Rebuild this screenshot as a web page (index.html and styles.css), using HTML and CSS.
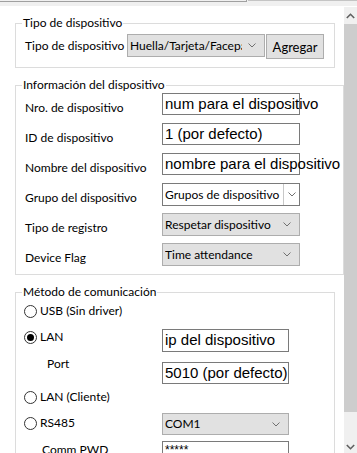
FILE: index.html
```html
<!DOCTYPE html>
<html>
<head>
    <title>Dispositivo</title>
    <link rel="stylesheet" href="styles.css">
</head>
<body>
<div class="window">
    <div class="tab-strip">
        <span class="tab-active"></span>
        <span class="tab-next"></span>
    </div>
    <div class="pane">
        <div class="content">
            <fieldset class="group group-narrow">
                <legend>Tipo de dispositivo</legend>
                <div class="type-row">
                    <span class="type-label">Tipo de dispositivo</span>
                    <div class="combo combo-type">
                        <span class="combo-text">Huella/Tarjeta/Facepa</span>
                        <svg class="chev" width="8" height="5" viewBox="0 0 8 5"><path d="M0.5 0.5 L4 4 L7.5 0.5" fill="none" stroke="#707070"/></svg>
                    </div>
                    <button class="btn">Agregar</button>
                </div>
            </fieldset>

            <fieldset class="group group-wide">
                <legend>Información del dispositivo</legend>
                <div class="info-grid">
                    <span class="lbl">Nro. de dispositivo</span>
                    <div class="field">num para el dispositivo</div>

                    <span class="lbl">ID de dispositivo</span>
                    <div class="field">1 (por defecto)</div>

                    <span class="lbl">Nombre del dispositivo</span>
                    <div class="field">nombre para el dispositivo</div>

                    <span class="lbl">Grupo del dispositivo</span>
                    <div class="combo combo-white">
                        <span class="combo-text">Grupos de dispositivo</span>
                        <span class="combo-btn">
                            <svg width="8" height="5" viewBox="0 0 8 5"><path d="M0.5 0.5 L4 4 L7.5 0.5" fill="none" stroke="#707070"/></svg>
                        </span>
                    </div>

                    <span class="lbl">Tipo de registro</span>
                    <div class="combo">
                        <span class="combo-text">Respetar dispositivo</span>
                        <svg class="chev" width="8" height="5" viewBox="0 0 8 5"><path d="M0.5 0.5 L4 4 L7.5 0.5" fill="none" stroke="#707070"/></svg>
                    </div>

                    <span class="lbl">Device Flag</span>
                    <div class="combo">
                        <span class="combo-text">Time attendance</span>
                        <svg class="chev" width="8" height="5" viewBox="0 0 8 5"><path d="M0.5 0.5 L4 4 L7.5 0.5" fill="none" stroke="#707070"/></svg>
                    </div>
                </div>
            </fieldset>

            <fieldset class="group group-narrow">
                <legend>Método de comunicación</legend>
                <div class="comm">
                    <div class="comm-row row-usb">
                        <span class="opt"><span class="radio"></span>USB (Sin driver)</span>
                    </div>
                    <div class="comm-row row-lan">
                        <span class="opt"><span class="radio checked"></span>LAN</span>
                        <div class="field field-short">ip del dispositivo</div>
                    </div>
                    <div class="comm-row row-port">
                        <span class="sub-lbl sub-port">Port</span>
                        <div class="field field-short">5010 (por defecto)</div>
                    </div>
                    <div class="comm-row row-client">
                        <span class="opt"><span class="radio"></span>LAN (Cliente)</span>
                    </div>
                    <div class="comm-row row-rs">
                        <span class="opt"><span class="radio"></span>RS485</span>
                        <div class="combo combo-short">
                            <span class="combo-text">COM1</span>
                            <svg class="chev" width="8" height="5" viewBox="0 0 8 5"><path d="M0.5 0.5 L4 4 L7.5 0.5" fill="none" stroke="#707070"/></svg>
                        </div>
                    </div>
                    <div class="comm-row row-pwd">
                        <span class="sub-lbl sub-pwd">Comm PWD</span>
                        <div class="field field-short field-pwd">*****</div>
                    </div>
                </div>
            </fieldset>
        </div>

        <div class="scrollbar">
            <div class="sb-btn sb-up">
                <svg width="9" height="6" viewBox="0 0 9 6"><path d="M0.8 5 L4.5 1.3 L8.2 5" fill="none" stroke="#606060" stroke-width="1.6"/></svg>
            </div>
            <div class="sb-thumb"></div>
            <div class="sb-track"></div>
            <div class="sb-btn sb-down">
                <svg width="9" height="6" viewBox="0 0 9 6"><path d="M0.8 1 L4.5 4.7 L8.2 1" fill="none" stroke="#606060" stroke-width="1.6"/></svg>
            </div>
        </div>
    </div>
</div>
</body>
</html>
```

FILE: styles.css
```css
body {
    margin: 0;
    font-family: Lato, "Noto Sans", sans-serif;
    font-size: 12px;
    color: #000;
    background: #fff;
}
.window {
    width: 357px;
    height: 453px;
    overflow: hidden;
    background: #fff;
}
.tab-strip {
    display: flex;
    height: 6px;
    background: #f0f0f0;
}
.tab-active {
    width: 246px;
    height: 1px;
    border-bottom: 1px solid #a0a0a0;
    border-right: 1px solid #a0a0a0;
}
.tab-next {
    flex: 1;
    margin-left: 1px;
    border-top: 1px solid #c4c4c4;
}
.pane {
    display: flex;
    height: 447px;
}
.content {
    width: 344px;
    padding-left: 15px;
    box-sizing: border-box;
}

/* group boxes */
.group {
    box-sizing: border-box;
    margin: 9px 0 0 0;
    padding: 0 9px;
    border: 1px solid #dcdcdc;
}
.group-narrow {
    width: 320px;
}
.group-wide {
    width: 329px;
    padding-bottom: 1px;
}
.group legend {
    margin-left: -3px;
    padding: 0 1px;
    line-height: 16px;
}

/* first group */
.type-row {
    display: flex;
    align-items: flex-start;
    margin-top: 3px;
    margin-bottom: 8px;
    height: 25px;
}
.type-label {
    width: 102px;
    padding-top: 4px;
    line-height: 16px;
    white-space: nowrap;
}
.combo-type {
    width: 138px;
    height: 23px;
}
.btn {
    width: 58px;
    height: 25px;
    margin-left: 1px;
    padding: 0;
    border: 1px solid #adadad;
    background: #e1e1e1;
    font-family: inherit;
    font-size: 13px;
    color: #000;
}

/* controls */
.field {
    box-sizing: border-box;
    height: 22px;
    width: 138px;
    padding-left: 2px;
    border: 1px solid #7a7a7a;
    background: #fff;
    font-family: "Liberation Sans", Arial, sans-serif;
    font-size: 15px;
    line-height: 20px;
    white-space: nowrap;
    overflow: visible;
}
.combo {
    box-sizing: border-box;
    display: flex;
    align-items: center;
    height: 23px;
    width: 138px;
    padding-left: 2px;
    border: 1px solid #adadad;
    background: #e1e1e1;
    overflow: hidden;
}
.combo-text {
    flex: 1;
    white-space: nowrap;
    overflow: hidden;
    line-height: 16px;
}
.chev {
    flex: none;
    margin: 0 8px 0 6px;
}
.combo-white {
    background: #fff;
    border-color: #7a7a7a;
    padding-right: 0;
}
.combo-btn {
    display: flex;
    align-items: center;
    justify-content: center;
    width: 15px;
    height: 100%;
    border-left: 1px solid #c8c8c8;
}

/* second group */
.info-grid {
    display: grid;
    grid-template-columns: 137px 138px;
    grid-auto-rows: 30px;
    align-items: start;
}
.lbl {
    padding-top: 7px;
    line-height: 16px;
    white-space: nowrap;
}

/* third group */
.comm-row {
    display: flex;
    align-items: flex-start;
}
.opt,
.sub-lbl {
    display: flex;
    align-items: center;
    width: 137px;
    line-height: 16px;
    white-space: nowrap;
}
.opt {
    margin-left: -1px;
    width: 138px;
}
.radio {
    box-sizing: border-box;
    display: flex;
    align-items: center;
    justify-content: center;
    width: 13px;
    height: 13px;
    margin-right: 3px;
    border: 1px solid #333;
    border-radius: 50%;
}
.radio.checked::after {
    content: "";
    width: 7px;
    height: 7px;
    border-radius: 50%;
    background: #000;
}
.sub-port {
    padding-left: 22px;
    width: 115px;
}
.sub-pwd {
    padding-left: 17px;
    width: 120px;
}
.field-short {
    width: 127px;
}
.combo-short {
    width: 127px;
    height: 22px;
}
.field-pwd {
    font-size: 12px;
    line-height: 16px;
}
.row-usb { height: 26px; }
.row-usb .opt { margin-top: 3px; }
.row-lan { height: 30px; }
.row-lan .opt { margin-top: 3px; }
.row-lan .field { margin-top: 3px; height: 23px; }
.row-port { height: 30px; }
.row-port .field { margin-top: 6px; }
.row-client { height: 22px; }
.row-client .opt { margin-top: 3px; }
.row-rs { height: 30px; }
.row-rs .opt { margin-top: 7px; }
.row-rs .combo { margin-top: 5px; }
.row-pwd { height: 30px; }
.row-pwd .sub-lbl { margin-top: 4px; }
.row-pwd .field { margin-top: 3px; }

/* scrollbar */
.scrollbar {
    display: flex;
    flex-direction: column;
    width: 13px;
    margin-top: 1px;
    background: #f0f0f0;
}
.sb-btn {
    display: flex;
    align-items: center;
    justify-content: center;
    height: 17px;
}
.sb-thumb {
    height: 388px;
    background: #cdcdcd;
}
.sb-track {
    flex: 1;
}
.sb-down {
    height: 13px;
}
```
